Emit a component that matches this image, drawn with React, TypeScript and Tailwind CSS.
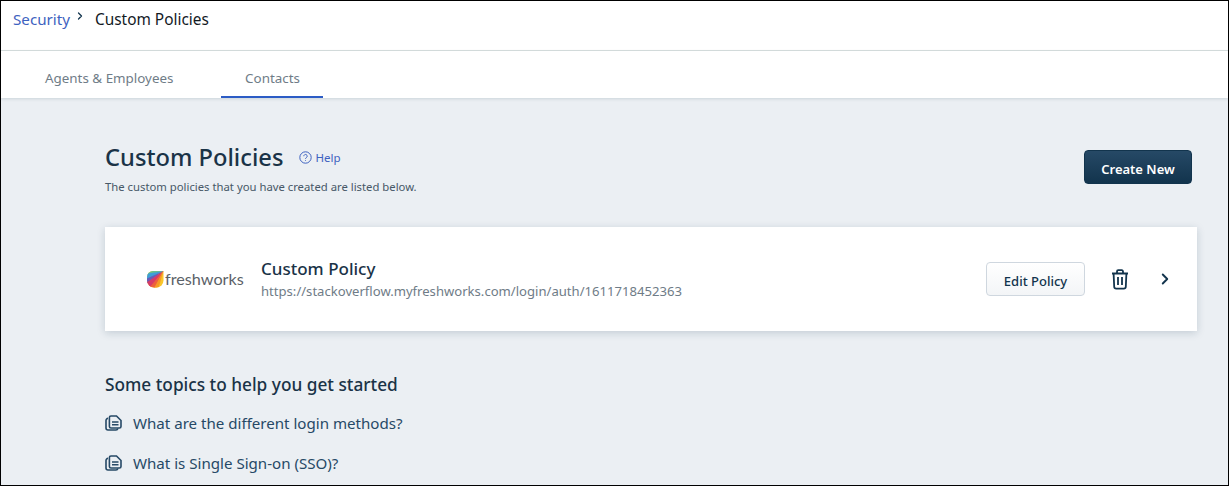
import React from 'react'
import { ChevronRight } from 'lucide-react'

const TopicIcon = (): JSX.Element => (
  <svg width="17" height="16" viewBox="0 0 17 16" fill="none" stroke="#264966" strokeWidth="1.6" className="shrink-0">
    <path d="M6 1h5.5L16 5.5v5.9a1.6 1.6 0 0 1-1.6 1.6H6a1.6 1.6 0 0 1-1.6-1.6V2.6A1.6 1.6 0 0 1 6 1Z" />
    <path d="M3 3.4a2 2 0 0 0-2 2V13a2 2 0 0 0 2 2h8a2 2 0 0 0 1.9-1.5" />
    <path d="M7 7h6.5M7 9.8h6.5" strokeWidth="1.4" />
  </svg>
)

const FreshworksMark = (): JSX.Element => (
  <svg width="18" height="18" viewBox="0 0 18 18" className="shrink-0">
    <defs>
      <clipPath id="leaf">
        <path d="M7 1H17.5V10.5A7 7 0 0 1 10.5 17.5H8A7 7 0 0 1 1 10.5V7A6 6 0 0 1 7 1Z" />
      </clipPath>
    </defs>
    <g clipPath="url(#leaf)">
      <rect width="18" height="18" fill="#f9c62b" />
      <path d="M17.5 1L0 0V5Z" fill="#67c08f" />
      <path d="M17.5 1L0 4V10Z" fill="#3d9fd8" />
      <path d="M17.5 1L0 9V14Z" fill="#6a5bb5" />
      <path d="M17.5 1L0 13V18H4Z" fill="#d63a68" />
      <path d="M17.5 1L3 18H9Z" fill="#ee5f3c" />
      <path d="M17.5 1L8 18H12.5Z" fill="#f59a26" />
    </g>
  </svg>
)

const App = (): JSX.Element => {
  return (
    <div className="h-[486px] w-[1229px] overflow-hidden border border-black bg-[#ebeff3] font-['Noto_Sans',sans-serif]">
      <div className="flex h-[50px] items-start border-b border-[#d8dfdf] bg-white pl-3 pt-2">
        <span className="text-[15.2px] leading-5 text-[#3e62c0]">Security</span>
        <ChevronRight size={12} strokeWidth={2.5} className="ml-[4px] mt-[1px] text-[#12344d]" />
        <span className="ml-[9px] mt-[1px] text-[15.4px] leading-5 text-[#12191f]">Custom Policies</span>
      </div>

      <div className="relative z-10 flex h-[47px] bg-white pl-11 shadow-[0_1px_3px_rgba(18,52,77,0.15)]">
        <div className="flex w-[176px] items-center pt-[8px] text-[13.4px] text-[#6f7c87]">
          Agents &amp; Employees
        </div>
        <div className="flex w-[102px] items-center justify-center border-b-2 border-[#2c5cc5] pl-[1px] pt-[10px] text-[13.4px] text-[#6f7c87]">
          Contacts
        </div>
      </div>

      <div className="px-[104px] pr-[31px] pt-[45px]">
        <div className="flex items-start justify-between pr-[5px]">
          <div>
            <div className="flex items-center">
              <h1 className="text-[23.7px] font-medium leading-[28px] text-[#1a3347]">Custom Policies</h1>
              <svg width="13" height="13" viewBox="0 0 13 13" fill="none" stroke="#3e62c0" className="ml-4 mt-[1px]">
                <circle cx="6.5" cy="6.5" r="5.7" />
                <path d="M4.8 5.2a1.7 1.7 0 1 1 2.6 1.4c-.6.4-.9.7-.9 1.3" />
                <path d="M6.5 9.2v.7" />
              </svg>
              <span className="ml-[3px] mt-[1px] text-[11.5px] text-[#3e62c0]">Help</span>
            </div>
            <p className="mt-[8px] text-[11.3px] leading-[15px] text-[#475867]">
              The custom policies that you have created are listed below.
            </p>
          </div>
          <button className="mt-[7px] h-[34px] w-[108px] rounded-[4px] border border-[#12344d] bg-gradient-to-b from-[#264966] to-[#12344d] pt-[6px] text-[13px] font-semibold text-white">
            Create New
          </button>
        </div>

        <div className="mt-[33px] flex h-[104px] items-center bg-white pl-[41px] pr-[23px] shadow-[0_2px_8px_rgba(18,52,77,0.18)]">
          <FreshworksMark />
          <span className="ml-[1px] w-[80px] font-['Lato',sans-serif] text-[16.2px] text-[#5b6167]">freshworks</span>
          <div className="ml-[16px] flex-1 pt-[2px]">
            <div className="text-[17px] font-medium leading-[22px] text-[#1a3347]">Custom Policy</div>
            <div className="text-[13.1px] leading-[22px] text-[#6f7c87]">
              https://stackoverflow.myfreshworks.com/login/auth/1611718452363
            </div>
          </div>
          <button className="h-[34px] w-[99px] rounded-[4px] border border-[#cfd7df] bg-gradient-to-b from-white to-[#f3f5f7] pt-[5px] text-[13px] font-medium text-[#12344d]">
            Edit Policy
          </button>
          <svg width="18" height="21" viewBox="0 0 18 21" fill="none" stroke="#12344d" strokeWidth="1.8" className="ml-[26px]">
            <path d="M1 4.5h16M6 4.5V2.4A1.2 1.2 0 0 1 7.2 1.2h3.6A1.2 1.2 0 0 1 12 2.4v2.1" />
            <path d="M2.6 4.5l.6 13.2a2 2 0 0 0 2 1.9h7.6a2 2 0 0 0 2-1.9l.6-13.2" />
            <path d="M7 8v8M11 8v8" />
          </svg>
          <ChevronRight size={18} strokeWidth={2.5} className="ml-[27px] text-[#12344d]" />
        </div>

        <h2 className="mt-[43px] text-[17.25px] font-medium leading-[22px] text-[#1a3347]">
          Some topics to help you get started
        </h2>
        <div className="mt-[17px] flex flex-col gap-[20px]">
          <div className="flex h-5 items-center gap-[11px] text-[15.1px] text-[#264966]">
            <TopicIcon />
            What are the different login methods?
          </div>
          <div className="flex h-5 items-center gap-[11px] text-[15.1px] text-[#264966]">
            <TopicIcon />
            What is Single Sign-on (SSO)?
          </div>
        </div>
      </div>
    </div>
  )
}

export default App
